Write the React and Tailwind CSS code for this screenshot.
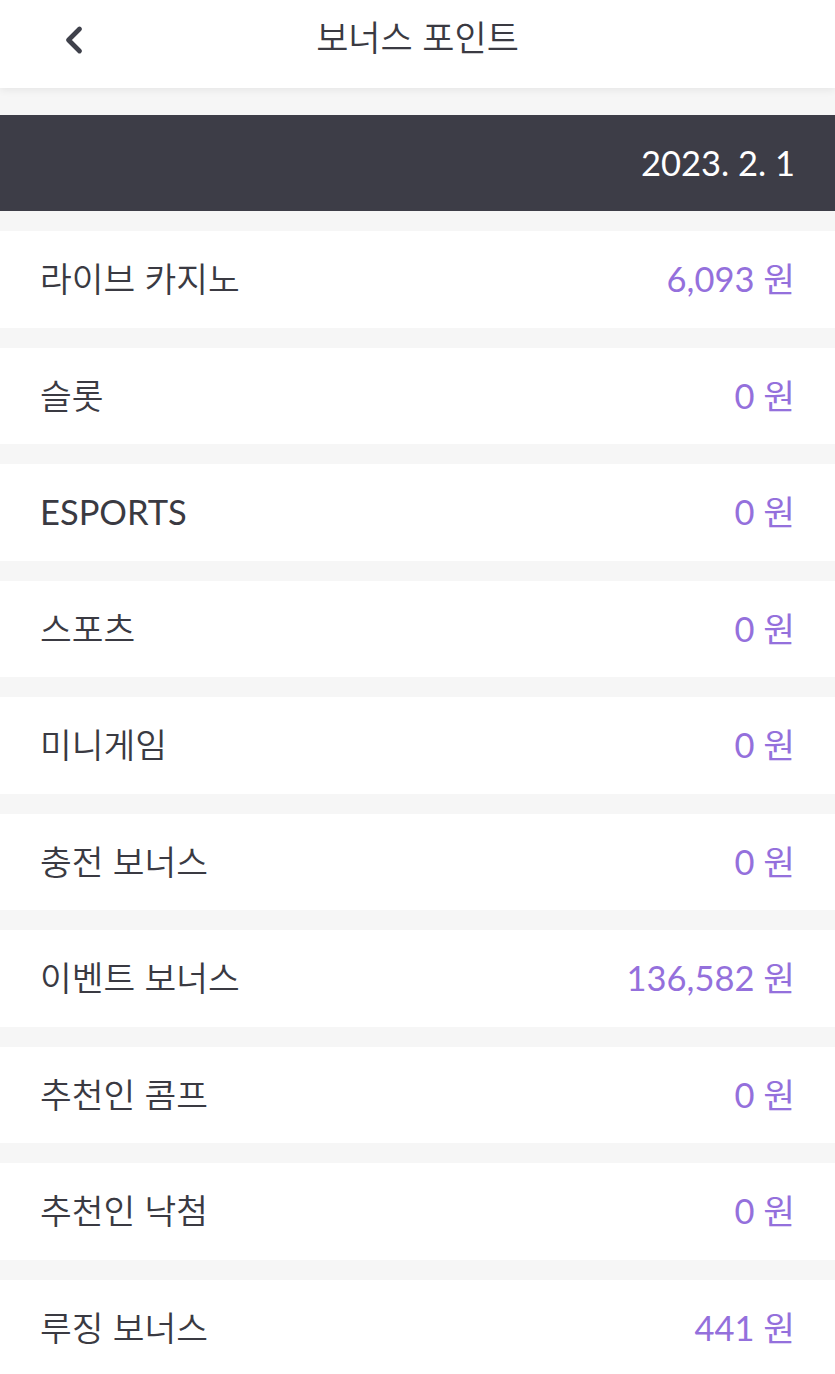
import { ChevronLeft } from 'lucide-react';

const items = [
  { label: '라이브 카지노', amount: '6,093' },
  { label: '슬롯', amount: '0' },
  { label: 'ESPORTS', amount: '0', latin: true },
  { label: '스포츠', amount: '0' },
  { label: '미니게임', amount: '0' },
  { label: '충전 보너스', amount: '0' },
  { label: '이벤트 보너스', amount: '136,582' },
  { label: '추천인 콤프', amount: '0' },
  { label: '추천인 낙첨', amount: '0' },
  { label: '루징 보너스', amount: '441' },
];

export default function App() {
  return (
    <div
      className="min-h-screen bg-[#f6f6f6] overflow-hidden"
      style={{ fontFamily: 'Lato, "Noto Sans CJK KR", sans-serif' }}
    >
      <header className="relative h-[88px] bg-white shadow-[0_2px_8px_rgba(0,0,0,0.07)] flex items-center justify-center">
        <button className="absolute left-[52px] top-[18px] text-[#3f414b]">
          <ChevronLeft size={44} strokeWidth={2.6} />
        </button>
        <h1 className="text-[35px] font-[350] text-[#3a3a42] -mt-[14px]">보너스 포인트</h1>
      </header>

      <div className="mt-[27px] h-[96px] bg-[#3d3d47] flex items-center justify-end px-[40px]">
        <span className="text-[34.5px] text-white">2023. 2. 1</span>
      </div>

      <div className="mt-[20px] flex flex-col gap-[20px]">
        {items.map((item) => (
          <div
            key={item.label}
            className="h-[96.5px] bg-white flex items-center justify-between px-[40px]"
          >
            <span
              className={
                item.latin
                  ? 'text-[34.5px] font-normal text-[#3a3a42]'
                  : 'text-[34.5px] font-[350] text-[#3a3a42]'
              }
            >
              {item.label}
            </span>
            <span className="text-[34.5px] text-[#9470dc]">{item.amount} 원</span>
          </div>
        ))}
      </div>
    </div>
  );
}
